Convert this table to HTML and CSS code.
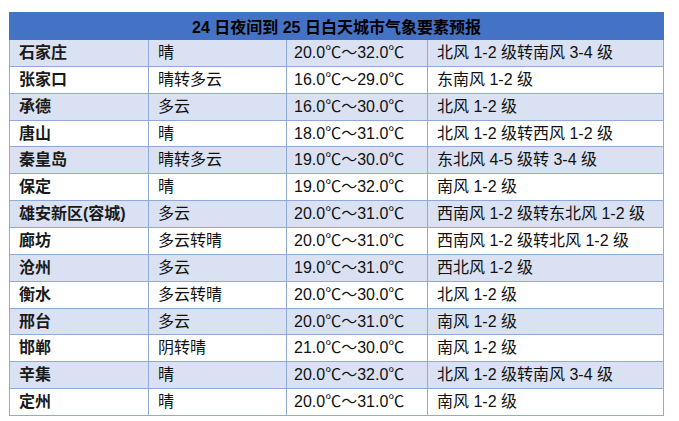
FILE: index.html
```html
<!DOCTYPE html>
<html lang="zh">
<head>
<meta charset="utf-8">
<link rel="stylesheet" href="styles.css">
</head>
<body>
<table class="fc">
  <colgroup>
    <col class="c1"><col class="c2"><col class="c3"><col class="c4">
  </colgroup>
  <thead>
    <tr><th colspan="4">24 日夜间到 25 日白天城市气象要素预报</th></tr>
  </thead>
  <tbody>
    <tr class="alt"><td class="city">石家庄</td><td>晴</td><td class="t">20.0℃～32.0℃</td><td>北风 1-2 级转南风 3-4 级</td></tr>
    <tr><td class="city">张家口</td><td>晴转多云</td><td class="t">16.0℃～29.0℃</td><td>东南风 1-2 级</td></tr>
    <tr class="alt"><td class="city">承德</td><td>多云</td><td class="t">16.0℃～30.0℃</td><td>北风 1-2 级</td></tr>
    <tr><td class="city">唐山</td><td>晴</td><td class="t">18.0℃～31.0℃</td><td>北风 1-2 级转西风 1-2 级</td></tr>
    <tr class="alt"><td class="city">秦皇岛</td><td>晴转多云</td><td class="t">19.0℃～30.0℃</td><td>东北风 4-5 级转 3-4 级</td></tr>
    <tr><td class="city">保定</td><td>晴</td><td class="t">19.0℃～32.0℃</td><td>南风 1-2 级</td></tr>
    <tr class="alt"><td class="city">雄安新区(容城)</td><td>多云</td><td class="t">20.0℃～31.0℃</td><td>西南风 1-2 级转东北风 1-2 级</td></tr>
    <tr><td class="city">廊坊</td><td>多云转晴</td><td class="t">20.0℃～31.0℃</td><td>西南风 1-2 级转北风 1-2 级</td></tr>
    <tr class="alt"><td class="city">沧州</td><td>多云</td><td class="t">19.0℃～31.0℃</td><td>西北风 1-2 级</td></tr>
    <tr><td class="city">衡水</td><td>多云转晴</td><td class="t">20.0℃～30.0℃</td><td>北风 1-2 级</td></tr>
    <tr class="alt"><td class="city">邢台</td><td>多云</td><td class="t">20.0℃～31.0℃</td><td>南风 1-2 级</td></tr>
    <tr><td class="city">邯郸</td><td>阴转晴</td><td class="t">21.0℃～30.0℃</td><td>南风 1-2 级</td></tr>
    <tr class="alt"><td class="city">辛集</td><td>晴</td><td class="t">20.0℃～32.0℃</td><td>北风 1-2 级转南风 3-4 级</td></tr>
    <tr><td class="city">定州</td><td>晴</td><td class="t">20.0℃～31.0℃</td><td>南风 1-2 级</td></tr>
  </tbody>
</table>
</body>
</html>
```
FILE: styles.css
```css
html, body {
  margin: 0;
  padding: 0;
  background: #ffffff;
}
body {
  padding: 12px 0 0 9px;
  font-family: "Liberation Sans", "Noto Sans CJK SC", sans-serif;
  font-size: 16px;
  color: #111;
}
.fc {
  border-collapse: collapse;
  table-layout: fixed;
  width: 654px;
}
.c1 { width: 139px; }
.c2 { width: 138px; }
.c3 { width: 141px; }
.c4 { width: 236px; }
.fc th {
  background: #4472c4;
  height: 27px;
  padding: 0;
  font-weight: bold;
  text-align: center;
  color: #000;
  border: 1px solid #4472c4;
  box-sizing: border-box;
}
.fc td {
  height: 26.87px;
  box-sizing: border-box;
  padding: 0 0 0 9px;
  border: 1.5px solid #8eaadb;
  white-space: nowrap;
  line-height: 1;
}
.fc td.t { padding-left: 7px; }
.fc td.city { font-weight: bold; color: #1a1a1a; }
.fc tr.alt td { background: #d9e1f2; }
```
